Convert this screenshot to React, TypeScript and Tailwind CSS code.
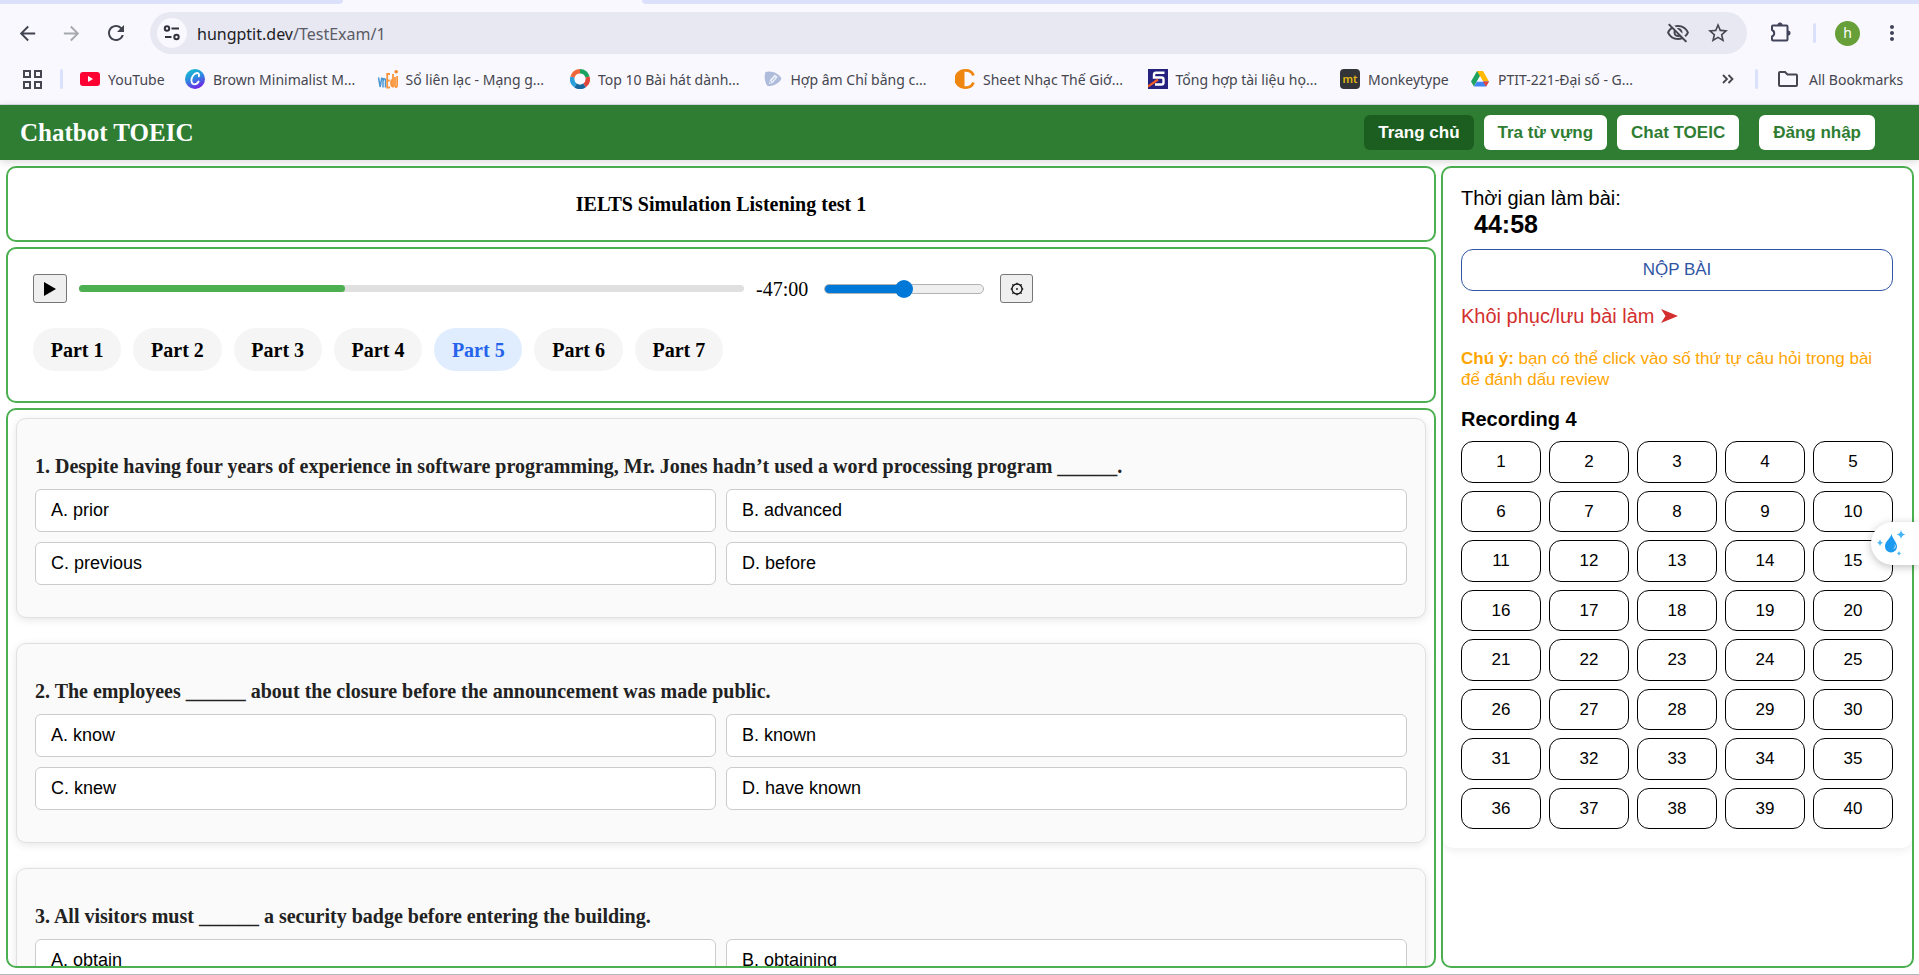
import React from "react";
import { MdArrowBack, MdArrowForward, MdRefresh, MdOutlineVisibilityOff, MdStarBorder, MdMoreVert } from "react-icons/md";

const browserFont = "font-['Noto_Sans',sans-serif]";
const serif = "font-['Liberation_Serif',serif]";
const sans = "font-['Liberation_Sans',sans-serif]";

function YouTubeIcon() {
  return (
    <svg viewBox="0 0 20 20" className="size-5">
      <rect x="0" y="3" width="20" height="14" rx="3" fill="#ff0033" />
      <path d="M8 7l5 3-5 3z" fill="#fff" />
    </svg>
  );
}

function CanvaIcon() {
  return (
    <svg viewBox="0 0 20 20" className="size-5">
      <defs>
        <linearGradient id="canva" x1="0.2" y1="0" x2="0.6" y2="1">
          <stop offset="0" stopColor="#12c2cf" />
          <stop offset="0.45" stopColor="#2a8fe0" />
          <stop offset="1" stopColor="#7320e6" />
        </linearGradient>
      </defs>
      <circle cx="10" cy="10" r="10" fill="url(#canva)" />
      <path d="M13.8 7.400c.7-1.800.1-3.400-1.600-3.400-3.200 0-5.800 4-5.800 7.300 0 2.400 1.200 4 3.100 4 1.900 0 3.200-1.200 4.100-2.800" fill="none" stroke="#fff" strokeWidth="1.800" strokeLinecap="round" />
    </svg>
  );
}

function VnEduIcon() {
  return (
    <svg viewBox="0 0 20 20" className="size-5">
      <path d="M0.500 8.500l1.700 9.500 1.600-9.500M5 18.500V9M5 12c.8-3 2.500-3 2.500 0v6.500" fill="none" stroke="#4a96d2" strokeWidth="1.500" />
      <path d="M12 5H9.200v13.500H12M9.200 11.500h2.500M15 5v13.500M15 11c-2.600-1.500-2.600 7.500 0 6.500M17 8v8.500c0 2.500 2.200 1.500 2.200 0V7" fill="none" stroke="#f9953a" strokeWidth="1.800" />
      <circle cx="18.200" cy="2.800" r="1.800" fill="#f58a2c" />
    </svg>
  );
}

function RingIcon() {
  return (
    <svg viewBox="0 0 20 20" className="size-5">
      <g fill="none" strokeWidth="4.400">
        <path d="M10 2.200A7.800 7.800 0 0 1 17.500 8" stroke="#1aa260" />
        <path d="M17.500 8A7.800 7.800 0 0 1 14.500 16.400" stroke="#e0473a" />
        <path d="M14.500 16.400A7.800 7.800 0 0 1 5.500 16.400" stroke="#14689f" />
        <path d="M5.500 16.400A7.800 7.800 0 0 1 2.500 8" stroke="#2a9ddb" />
        <path d="M2.500 8A7.800 7.800 0 0 1 10 2.200" stroke="#f0663a" />
      </g>
    </svg>
  );
}

function PickIcon() {
  return (
    <svg viewBox="0 0 20 20" className="size-5">
      <path d="M2.500 3C8 1 16 4 18.500 9.500 16 14.500 10 17.500 4.500 17 1.500 13 1 7 2.500 3z" fill="#aebbdb" />
      <path d="M6 15l.8-4 5-5.500 3 2.500-5 6z" fill="#e9edf7" />
      <path d="M9 12l3-3.500M8 14l-1-2" stroke="#aebbdb" strokeWidth="1" />
    </svg>
  );
}

function SheetIcon() {
  return (
    <svg viewBox="0 0 20 20" className="size-5">
      <path d="M9.500 0a10 10 0 0 0 0 20z" fill="#ef860f" />
      <path d="M9 1.500c5-.5 8 1 9.500 5M9 18.500c5 .5 8-1 9.500-5" fill="none" stroke="#ef860f" strokeWidth="2.600" />
    </svg>
  );
}

function GIcon() {
  return (
    <svg viewBox="0 0 20 20" className="size-5">
      <rect width="20" height="20" fill="#25217f" />
      <path d="M16.500 3.800H8Q6 3.800 6 6v2.500h7.500q2 0 2 2v3q0 2-2 2H7" fill="none" stroke="#fff" strokeWidth="2.400" />
      <path d="M0 17.500L10 10.500" stroke="#f15a29" strokeWidth="2.200" />
    </svg>
  );
}

function MonkeyIcon() {
  return (
    <span className="flex size-5 shrink-0 items-center justify-center rounded bg-[#323437] pb-0.5 text-[11px] leading-none font-semibold text-[#e2b714]">mt</span>
  );
}

function DriveIcon() {
  return (
    <svg viewBox="0 0 20 20" className="size-5">
      <path d="M7 2h6l-6.500 11L4 17.500 1 12.500z" fill="#1ea362" />
      <path d="M7 2h6l6 10.500h-6z" fill="#ffba00" />
      <path d="M4 17.500l3-5h12l-3 5z" fill="#4285f4" />
      <path d="M13 12.500h6l-3 5z" fill="#ea4335" />
      <path d="M10 7.300l-3 5.200h6z" fill="#f9f8fe" />
    </svg>
  );
}

const bookmarks = [
  { label: "YouTube", Icon: YouTubeIcon },
  { label: "Brown Minimalist M...", Icon: CanvaIcon },
  { label: "Sổ liên lạc - Mạng g...", Icon: VnEduIcon },
  { label: "Top 10 Bài hát dành...", Icon: RingIcon },
  { label: "Hợp âm Chỉ bằng c...", Icon: PickIcon },
  { label: "Sheet Nhạc Thế Giớ...", Icon: SheetIcon },
  { label: "Tổng hợp tài liệu họ...", Icon: GIcon },
  { label: "Monkeytype", Icon: MonkeyIcon },
  { label: "PTIT-221-Đại số - G...", Icon: DriveIcon },
];

function BrowserChrome() {
  return (
    <div className={`shrink-0 border-b border-[#dcdce4] bg-[#f9f8fe] text-[#45464f] ${browserFont}`}>
      <div className="flex h-1 bg-[#f9f8fe]">
        <div className="w-[343px] rounded-br-lg bg-[#dce1fb]" />
        <div className="w-[299px]" />
        <div className="flex-1 rounded-bl-lg bg-[#dce1fb]" />
      </div>
      <div className="mt-2 flex h-[42px] items-center">
        <div className="flex w-[150px] shrink-0 items-center gap-[21px] pl-4 text-[24px]">
          <button aria-label="Back"><MdArrowBack className="size-[23px] text-[#41434f]" /></button>
          <button aria-label="Forward"><MdArrowForward className="size-[23px] text-[#a7a8b0]" /></button>
          <button aria-label="Reload"><MdRefresh className="text-[#41434f]" /></button>
        </div>
        <div className="flex h-full flex-1 items-center rounded-full bg-[#e8e8f2] pr-[17px] pl-[7px]">
          <button aria-label="Site information" className="flex size-[30px] items-center justify-center rounded-full bg-[#f9f8fe]">
            <svg viewBox="0 0 18 18" className="size-[18px]" fill="none" stroke="#30313a" strokeWidth="2">
              <circle cx="4" cy="4.500" r="2.200" />
              <path d="M8.500 4.500H16M2 13h6.500" />
              <circle cx="13.500" cy="13" r="2.200" />
            </svg>
          </button>
          <div className="ml-[10px] flex-1 pt-0.5 text-[16px] text-[#5a5b66]"><span className="text-[#1d1d24]">hungptit.dev</span>/TestExam/1</div>
          <div className="flex items-center gap-4 text-[24px] text-[#45464f]">
            <button aria-label="Tracking protection"><MdOutlineVisibilityOff /></button>
            <button aria-label="Bookmark"><MdStarBorder /></button>
          </div>
        </div>
        <div className="flex w-[172px] shrink-0 items-center pl-[22px] text-[24px] text-[#41445a]">
          <button aria-label="Extensions">
            <svg viewBox="0 0 24 24" className="size-6">
              <path d="M4 4.500h13.500q1 0 1 1V18.500q0 1-1 1H4q-1 0-1-1V15.500a3.500 3.500 0 0 0 0-6.500V5.500q0-1 1-1z" fill="none" stroke="#41445a" strokeWidth="2" strokeLinejoin="round" />
              <path d="M8.500 4a2.500 2.500 0 0 1 5 0zM19 9.500a2.500 2.500 0 0 1 0 5z" fill="#41445a" />
            </svg>
          </button>
          <span className="ml-5 h-5 w-[3px] rounded bg-[#dce1fb]" />
          <button aria-label="Profile" className="ml-[19px] flex size-[25px] items-center justify-center rounded-full bg-[#679f38] text-[14px] leading-none text-white">h</button>
          <button aria-label="Menu" className="ml-5"><MdMoreVert /></button>
        </div>
      </div>
      <div className="flex h-[50px] items-center text-[14px] whitespace-nowrap">
        <button aria-label="Tab groups" className="ml-[23px]">
          <svg viewBox="0 0 19 19" className="size-[19px]" fill="none" stroke="#45464f" strokeWidth="2">
            <path d="M1 1h6v6H1zM12 1h6v6h-6zM1 12h6v6H1zM12 12h6v6h-6z" />
          </svg>
        </button>
        <span className="ml-[18px] h-5 w-[3px] rounded bg-[#dce1fb]" />
        <nav className="ml-[17px] grid flex-1 grid-cols-[105px_repeat(6,1fr)_130px_240px]">
          {bookmarks.map(({ label, Icon }) => (
            <a key={label} href="#" className="flex items-center gap-2">
              <Icon />
              <span>{label}</span>
            </a>
          ))}
        </nav>
        <div className="flex w-[209px] shrink-0 items-center">
          <button aria-label="More bookmarks" className="ml-3">
            <svg viewBox="0 0 12 10" className="h-[10px] w-3" fill="none" stroke="#45464f" strokeWidth="1.800">
              <path d="M1 1l4 4-4 4M6.500 1l4 4-4 4" />
            </svg>
          </button>
          <span className="ml-[21px] h-5 w-[3px] rounded bg-[#dce1fb]" />
          <a href="#" className="ml-[19px] flex items-center gap-[10px]">
            <svg viewBox="0 0 22 18" className="h-[18px] w-[22px]" fill="none" stroke="#45464f" strokeWidth="2">
              <path d="M2 15V3c0-.6.400-1 1-1h5l2.500 2.500H19c.6 0 1 .4 1 1V15c0 .6-.4 1-1 1H3c-.6 0-1-.4-1-1z" />
            </svg>
            All Bookmarks
          </a>
        </div>
      </div>
    </div>
  );
}

function Header() {
  const light = "h-[35px] rounded-md bg-white px-[14px] text-[#2e7d32]";
  return (
    <header className="relative flex h-[55px] shrink-0 items-center justify-between bg-[#2e7d32] pr-11 pl-5 shadow-[0_2px_8px_rgba(0,0,0,0.15)]">
      <h1 className={`text-[25px] font-bold text-white ${serif}`}>Chatbot TOEIC</h1>
      <nav className={`flex gap-[10px] text-[17px] font-bold ${sans}`}>
        <button className="h-[35px] rounded-md bg-[#1b5e20] px-[14px] text-white">Trang chủ</button>
        <button className={light}>Tra từ vựng</button>
        <button className={light}>Chat TOEIC</button>
        <button className={`ml-[10px] ${light}`}>Đăng nhập</button>
      </nav>
    </header>
  );
}

const panel = "rounded-[10px] border-2 border-[#4caf50] bg-white";

function Player() {
  const small = "flex h-[29px] items-center justify-center rounded-[3px] border border-[#767676] bg-[#efefef]";
  return (
    <section className={`h-[156px] px-[25px] pt-[25px] ${panel}`}>
      <div className="flex h-[29px] items-center">
        <button aria-label="Play" className={`w-[34px] ${small}`}>
          <svg viewBox="0 0 12 14" className="h-[14px] w-3"><path d="M0 0l12 7-12 7z" fill="#000" /></svg>
        </button>
        <div className="ml-3 h-[7px] w-[665px] rounded-full bg-[#e0e0e0]">
          <div className="h-full w-2/5 rounded-full bg-[#4caf50]" />
        </div>
        <span className="ml-3 text-[20px]">-47:00</span>
        <input
          type="range"
          aria-label="Volume"
          defaultValue={50}
          className="ml-4 h-[18px] w-[160px] appearance-none bg-transparent [&::-webkit-slider-runnable-track]:h-[10px] [&::-webkit-slider-runnable-track]:rounded-full [&::-webkit-slider-runnable-track]:border [&::-webkit-slider-runnable-track]:border-[#b2b2b2] [&::-webkit-slider-runnable-track]:bg-linear-to-r [&::-webkit-slider-runnable-track]:from-[#0078d7] [&::-webkit-slider-runnable-track]:from-50% [&::-webkit-slider-runnable-track]:to-[#efefef] [&::-webkit-slider-runnable-track]:to-50% [&::-webkit-slider-thumb]:-mt-[5px] [&::-webkit-slider-thumb]:size-[18px] [&::-webkit-slider-thumb]:appearance-none [&::-webkit-slider-thumb]:rounded-full [&::-webkit-slider-thumb]:bg-[#0078d7]"
        />
        <button aria-label="Settings" className={`ml-4 w-[33px] ${small}`}>
          <svg viewBox="0 0 14 14" className="size-[14px]" fill="none" stroke="#111" strokeWidth="1.300">
            <circle cx="7" cy="7" r="5" />
            <path d="M7 .8v1.200M7 12v1.200M.8 7H2M12 7h1.200M2.400 2.400l.9.900M10.700 10.700l.9.900M2.400 11.600l.9-.9M10.700 3.300l.9-.9" />
            <circle cx="7" cy="7" r="0.300" fill="#111" />
          </svg>
        </button>
      </div>
      <div className="mt-[25px] grid w-[690px] grid-cols-7 gap-3 text-[20px] font-bold">
        {[1, 2, 3, 4, 5, 6, 7].map((n) => (
          <button key={n} className={`h-[43px] rounded-full ${n === 5 ? "bg-[#e0edff] text-[#2563eb]" : "bg-[#f5f5f5] text-black"}`}>
            Part {n}
          </button>
        ))}
      </div>
    </section>
  );
}

const questions = [
  { text: "1. Despite having four years of experience in software programming, Mr. Jones hadn’t used a word processing program ______.", options: ["A. prior", "B. advanced", "C. previous", "D. before"] },
  { text: "2. The employees ______ about the closure before the announcement was made public.", options: ["A. know", "B. known", "C. knew", "D. have known"] },
  { text: "3. All visitors must ______ a security badge before entering the building.", options: ["A. obtain", "B. obtaining"] },
];

function Questions() {
  return (
    <section className={`flex min-h-0 flex-1 flex-col gap-[25px] overflow-hidden p-2 ${panel}`}>
      {questions.map((q) => (
        <article key={q.text} className="shrink-0 rounded-[10px] border border-[#e0e0e0] bg-[#fafafa] px-[18px] pt-[35px] pb-8 shadow-[0_2px_8px_rgba(0,0,0,0.1)]">
          <p className="text-[20px] leading-6 font-bold text-[#222]">{q.text}</p>
          <div className={`mt-[11px] grid grid-cols-2 gap-[10px] text-[18px] ${sans}`}>
            {q.options.map((o) => (
              <button key={o} className="h-[43px] rounded-md border border-[#ccc] bg-white px-[15px] text-left">{o}</button>
            ))}
          </div>
        </article>
      ))}
    </section>
  );
}

function Sidebar() {
  return (
    <aside className={`overflow-hidden ${panel} ${sans}`}>
      <div className="rounded-[10px] pt-[18px] pr-[19px] pb-[19px] pl-[18px] shadow-[0_2px_10px_rgba(0,0,0,0.08)]">
        <p className="text-[20px] leading-6">Thời gian làm bài:</p>
        <p className="pl-[13px] text-[25px] leading-7 font-bold">44:58</p>
        <button className="mt-[11px] h-[42px] w-full rounded-xl border border-[#2f55a4] text-[17px] text-[#2f55a4]">NỘP BÀI</button>
        <a href="#" className="mt-[13px] flex items-center gap-[6px] text-[20px] leading-6 text-[#d32f2f]">
          Khôi phục/lưu bài làm
          <svg viewBox="0 0 17 14" className="h-[14px] w-[17px]"><path d="M0 0l17 7-17 7 4.500-7z" fill="#d32f2f" /></svg>
        </a>
        <p className="mt-5 pr-2 text-[17px] leading-[21px] text-[#ffa500]"><b>Chú ý:</b> bạn có thể click vào số thứ tự câu hỏi trong bài để đánh dấu review</p>
        <h2 className="mt-[17px] text-[20px] leading-6 font-bold">Recording 4</h2>
        <div className="mt-[10px] grid h-[388px] grid-cols-5 grid-rows-8 gap-2 text-[17px]">
          {Array.from({ length: 40 }, (_, i) => (
            <button key={i} className="rounded-xl border border-black">{i + 1}</button>
          ))}
        </div>
      </div>
    </aside>
  );
}

function FloatingHelper() {
  return (
    <button aria-label="Assistant" className="fixed top-[522px] right-0 flex h-[43px] w-12 items-center rounded-l-full bg-white pl-[5px] shadow-[0_2px_8px_rgba(0,0,0,0.25)]">
      <svg viewBox="0 0 30 28" className="h-7 w-[30px]">
        <path d="M15.500 4c-.8 4.500-6.500 7-6.500 12.500a6 6 0 0 0 12 0c0-4-4-7-5.500-12.500z" fill="#1b9af0" />
        <path d="M18.500 14c1 2 .3 4-1.300 5 2.600-.3 3.300-3 1.300-5z" fill="#fff" />
        <path d="M25 0q.7 4 4.500 4.500Q25.700 5.200 25 9q-.7-3.800-4.500-4.500Q24.300 4 25 0zM4 9.500q.5 2.700 3 3.200-2.500.5-3 3.200-.5-2.700-3-3.200 2.500-.5 3-3.200zM23 21q.4 2 2 2.400-1.600.4-2 2.400-.4-2-2-2.400 1.600-.4 2-2.400z" fill="#45b5f7" />
      </svg>
    </button>
  );
}

export default function App() {
  return (
    <div className={`flex h-screen flex-col overflow-hidden border-b border-[#b0b8bd] bg-white text-black ${serif}`}>
      <BrowserChrome />
      <Header />
      <main className="grid min-h-0 flex-1 grid-cols-[1fr_473px] gap-[5px] pt-[6px] pr-[5px] pb-[6px] pl-[6px]">
        <div className="flex min-h-0 min-w-0 flex-col gap-[5px]">
          <section className={`flex h-[76px] shrink-0 items-center justify-center ${panel}`}>
            <h2 className="text-[20px] font-bold">IELTS Simulation Listening test 1</h2>
          </section>
          <Player />
          <Questions />
        </div>
        <Sidebar />
      </main>
      <FloatingHelper />
    </div>
  );
}
